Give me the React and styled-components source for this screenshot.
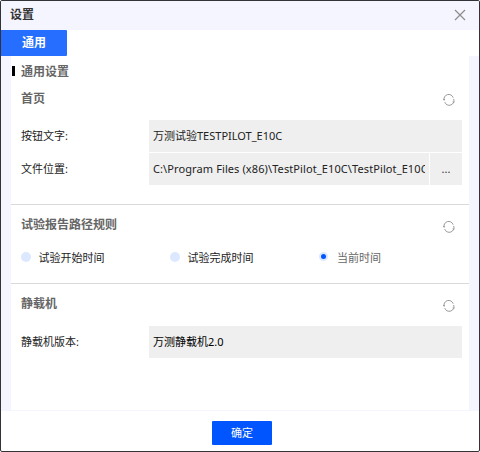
import React from "react";
import styled, { createGlobalStyle } from "styled-components";

const GlobalStyle = createGlobalStyle`
  * { box-sizing: border-box; }
  body { margin: 0; background: #fff; }
  body, button, input { font-family: "Noto Sans", "Noto Sans CJK SC", sans-serif; }
`;

const Dialog = styled.div`
  display: flex;
  flex-direction: column;
  width: 480px;
  height: 452px;
  border: 1px solid #333337;
  border-radius: 2px;
  background: #fff;
  overflow: hidden;
`;

const Header = styled.header`
  display: flex;
  align-items: center;
  justify-content: space-between;
  height: 29px;
  flex: none;
  padding: 0 13px 0 9px;
  background: #f5f5ff;
`;

const Title = styled.h1`
  margin: 0;
  padding-bottom: 1px;
  font-size: 12px;
  line-height: 18px;
  font-weight: 700;
  color: #333;
`;

const IconButton = styled.button`
  display: flex;
  padding: 0;
  border: 0;
  background: none;
  color: ${(p) => p.$color || "#999"};
`;

const CloseButton = styled(IconButton)`
  margin-bottom: 1px;
`;

const Tabs = styled.nav`
  height: 26px;
  flex: none;
  display: flex;
`;

const Tab = styled.button`
  width: 66px;
  border: 0;
  border-radius: 0 1px 1px 0;
  padding: 0;
  background: #266eff;
  color: #fff;
  font-size: 12px;
  line-height: 24px;
  font-weight: 700;
`;

const Body = styled.main`
  height: 355px;
  flex: none;
  padding: 0 10px 1px;
  background: #f5f5ff;
`;

const Panel = styled.div`
  height: 354px;
  background: #fff;
`;

const PageHeading = styled.h2`
  display: flex;
  align-items: center;
  gap: 6px;
  height: 31px;
  margin: 0;
  padding-left: 1px;
  font-size: 12px;
  line-height: 17px;
  font-weight: 700;
  color: #666;

  &::before {
    content: "";
    width: 3px;
    height: 10px;
    margin-bottom: 1px;
    background: #000;
  }
`;

const Section = styled.section`
  height: ${(p) => p.$height}px;
  border-top: ${(p) => (p.$divided ? "1px solid #d9d9d9" : "0")};
`;

const SectionHead = styled.div`
  display: flex;
  align-items: flex-start;
  justify-content: space-between;
  height: ${(p) => p.$height}px;
  padding: ${(p) => p.$top}px 14px 0 10px;
`;

const SectionTitle = styled.h3`
  margin: 0;
  font-size: 12px;
  line-height: 18px;
  font-weight: 700;
  color: #666;
`;

const ResetButton = styled(IconButton)`
  margin-top: ${(p) => p.$offset}px;
`;

const Row = styled.div`
  display: flex;
  height: 32px;
  margin: 0 7px 1px 10px;
`;

const Label = styled.label`
  width: 128px;
  flex: none;
  font-size: 11px;
  line-height: 32px;
  color: #222;
`;

const Field = styled.div`
  flex: 1;
  min-width: 0;
  padding: 0 4px;
  background: #efefef;
  color: ${(p) => p.$color || "#222"};
  font-size: 11px;
  line-height: 32px;
`;

const Value = styled.div`
  overflow: hidden;
  white-space: pre;
`;

const Latin = styled.span`
  font-size: 11px;
  letter-spacing: ${(p) => p.$spacing || 0}px;
`;

const BrowseButton = styled.button`
  width: 32px;
  flex: none;
  margin-left: 1px;
  padding: 0;
  border: 0;
  background: #efefef;
  color: #333;
  font-size: 11px;
  line-height: 30px;
`;

const Options = styled.div`
  display: grid;
  grid-template-columns: 149px 149px 1fr;
  height: 26px;
  padding-left: 10px;
`;

const Option = styled.label`
  display: flex;
  align-items: center;
  gap: ${(p) => (p.$checked ? 9 : 7.5)}px;
  padding-bottom: 1px;
  color: ${(p) => (p.$checked ? "#666" : "#222")};
  font-size: 11px;
`;

const Dot = styled.span`
  width: ${(p) => (p.$checked ? 9 : 10)}px;
  height: ${(p) => (p.$checked ? 9 : 10)}px;
  border-radius: 50%;
  background: ${(p) => (p.$checked ? "#0055ff" : "#dce8ff")};
  border: ${(p) => (p.$checked ? "2px solid #dce8ff" : "0")};
`;

const Footer = styled.footer`
  display: flex;
  justify-content: center;
  padding: 10px 0 0 4px;
  height: 40px;
`;

const ConfirmButton = styled.button`
  width: 60px;
  height: 24px;
  padding: 0;
  border: 0;
  border-radius: 1px;
  background: #0055ff;
  color: #fff;
  font-size: 11px;
  line-height: 24px;
`;

const CloseIcon = () => (
  <svg width="12" height="12" viewBox="0 0 12 12" fill="none" stroke="currentColor" strokeWidth="1.2">
    <path d="M1 1L11 11M11 1L1 11" />
  </svg>
);

const ResetIcon = () => (
  <svg width="12" height="12" viewBox="0 0 12 12" fill="none" stroke="currentColor" strokeWidth="1">
    <path d="M1.2 6.6A4.7 4.7 0 0 1 10.2 3.7M10.7 5A4.7 4.7 0 0 1 1.7 8.1" />
    <path d="M0.1 6.1L1.1 5L2 5.8M9.6 8L10.7 8.7L11.7 7.6" />
  </svg>
);

const Reset = ({ offset = 5 }) => (
  <ResetButton aria-label="重置" $offset={offset}>
    <ResetIcon />
  </ResetButton>
);

const options = ["试验开始时间", "试验完成时间", "当前时间"];

export default function App() {
  return (
    <>
      <GlobalStyle />
      <Dialog>
        <Header>
          <Title>设置</Title>
          <CloseButton aria-label="关闭" $color="#8c8c8c">
            <CloseIcon />
          </CloseButton>
        </Header>
        <Tabs>
          <Tab>通用</Tab>
        </Tabs>
        <Body>
          <Panel>
            <PageHeading>通用设置</PageHeading>
            <Section $height={117}>
              <SectionHead $height={33} $top={3}>
                <SectionTitle>首页</SectionTitle>
                <Reset offset={4} />
              </SectionHead>
              <Row>
                <Label>按钮文字:</Label>
                <Field>
                  <Value>万测试验<Latin>TESTPILOT_E10C</Latin></Value>
                </Field>
              </Row>
              <Row>
                <Label>文件位置:</Label>
                <Field>
                  <Value>
                    <Latin $spacing={0.1}>{"C:\\Program Files (x86)\\TestPilot_E10C\\TestPilot_E10C"}</Latin>
                  </Value>
                </Field>
                <BrowseButton>...</BrowseButton>
              </Row>
            </Section>
            <Section $divided $height={79}>
              <SectionHead $height={39} $top={11}>
                <SectionTitle>试验报告路径规则</SectionTitle>
                <Reset />
              </SectionHead>
              <Options>
                {options.map((name, i) => (
                  <Option key={name} $checked={i === 2}>
                    <Dot $checked={i === 2} />
                    {name}
                  </Option>
                ))}
              </Options>
            </Section>
            <Section $divided $height={127}>
              <SectionHead $height={42} $top={11}>
                <SectionTitle>静载机</SectionTitle>
                <Reset />
              </SectionHead>
              <Row>
                <Label>静载机版本:</Label>
                <Field $color="#000">
                  <Value>万测静载机<Latin>2.0</Latin></Value>
                </Field>
              </Row>
            </Section>
          </Panel>
        </Body>
        <Footer>
          <ConfirmButton>确定</ConfirmButton>
        </Footer>
      </Dialog>
    </>
  );
}
